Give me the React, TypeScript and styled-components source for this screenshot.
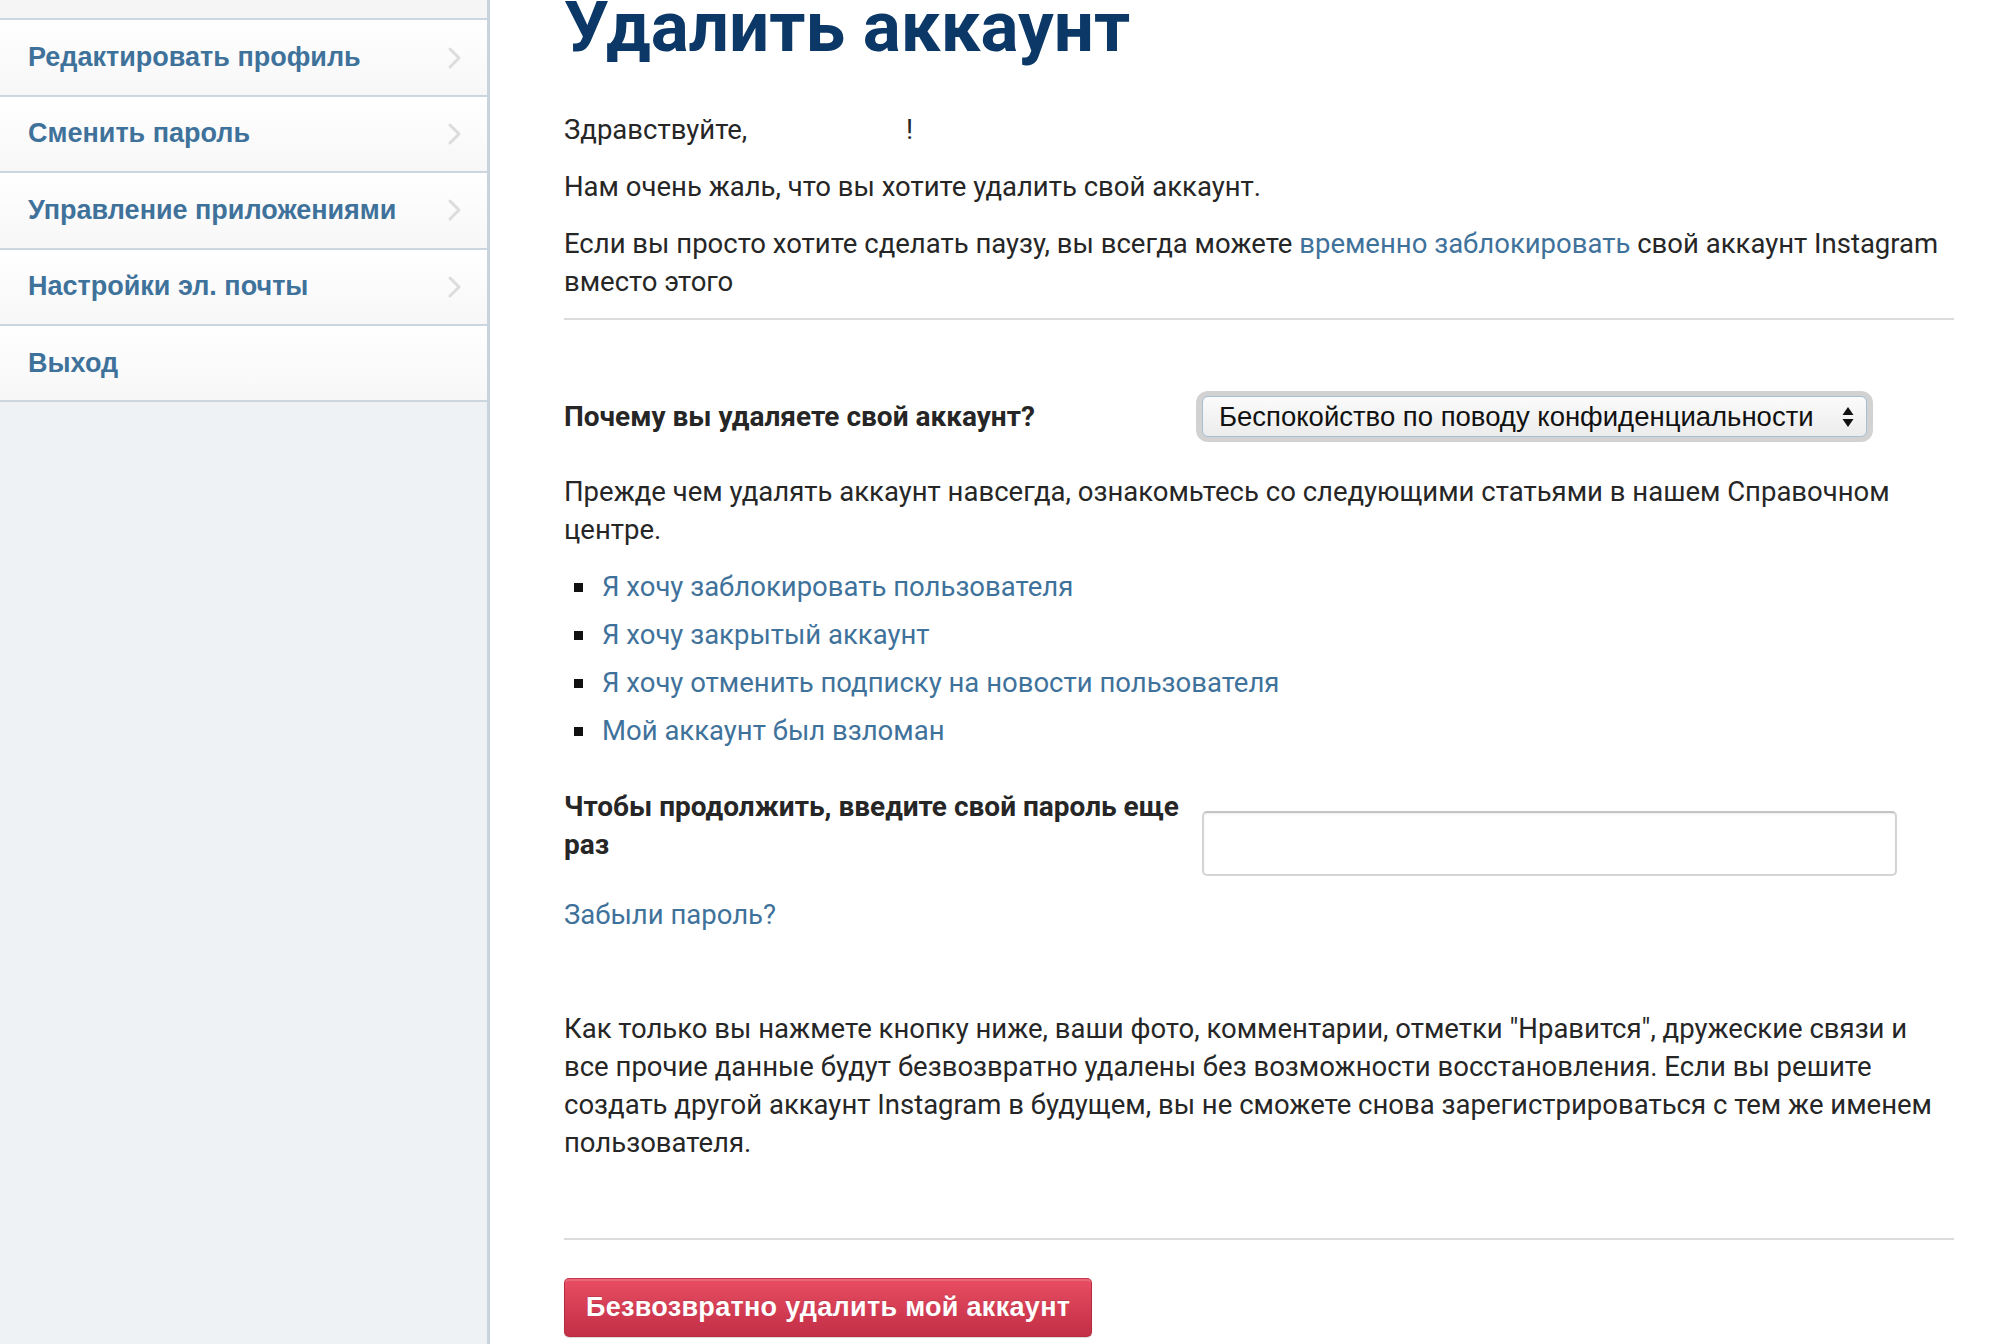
import React from 'react'
import styled, { createGlobalStyle } from 'styled-components'

const GlobalStyle = createGlobalStyle`
  html, body {
    margin: 0;
    padding: 0;
    background: #fff;
  }
  body {
    font-family: Roboto, "Liberation Sans", Arial, sans-serif;
    color: #262626;
    overflow: hidden;
  }
  * {
    box-sizing: border-box;
  }
`

const menuItems = [
  { label: 'Мой профиль', muted: true, arrow: true },
  { label: 'Редактировать профиль', arrow: true },
  { label: 'Сменить пароль', arrow: true },
  { label: 'Управление приложениями', arrow: true },
  { label: 'Настройки эл. почты', arrow: true },
  { label: 'Выход', arrow: false },
]

const helpLinks = [
  'Я хочу заблокировать пользователя',
  'Я хочу закрытый аккаунт',
  'Я хочу отменить подписку на новости пользователя',
  'Мой аккаунт был взломан',
]

// page is scrolled a bit, so the top row and the heading are cut off
const Page = styled.div`
  display: flex;
  min-height: 1420px;
  margin-top: -56px;
`

const Sidebar = styled.nav`
  width: 490px;
  flex-shrink: 0;
  background: #eef2f5;
  border-right: 3px solid #c8d3dd;
`

const MenuList = styled.ul`
  list-style: none;
  margin: 0;
  padding: 0;
`

const MenuItem = styled.li<{ $muted?: boolean }>`
  height: 76.4px;
  display: flex;
  align-items: center;
  justify-content: space-between;
  padding: 0 24px 0 28px;
  background: ${({ $muted }) => ($muted ? '#f5f5f5' : 'linear-gradient(#ffffff, #f7f7f7)')};
  border-bottom: 2px solid #cbd6df;
  font-family: "Liberation Sans", Arial, sans-serif;
  font-weight: 700;
  font-size: 27px;
  color: #3f729b;
  cursor: pointer;
`

const Main = styled.main`
  flex: 1;
  padding: 43px 46px 0 74px;
`

const Title = styled.h1`
  margin: 0 0 44px;
  font-family: Roboto, "Liberation Sans", sans-serif;
  font-weight: 700;
  font-size: 71px;
  line-height: 80px;
  color: #0b3866;
`

const Text = styled.p<{ $gap?: number }>`
  margin: 0 0 ${({ $gap }) => $gap ?? 19}px;
  font-size: 27.5px;
  line-height: 38px;
`

const Link = styled.a`
  color: #3f729b;
  text-decoration: none;
  cursor: pointer;
`

const Divider = styled.hr<{ $after: number }>`
  margin: 0 0 ${({ $after }) => $after}px;
  border: 0;
  height: 2px;
  background: #dbdbdb;
`

const FieldRow = styled.div<{ $align: string }>`
  display: grid;
  grid-template-columns: 632px auto;
  align-items: ${({ $align }) => $align};
`

const Label = styled.div`
  font-size: 28px;
  line-height: 38px;
  font-weight: 700;
`

const SelectRing = styled.div`
  width: 677px;
  padding: 5px 6px;
  border-radius: 12px;
  background: #d2d2d2;
`

const SelectBox = styled.div`
  display: flex;
  align-items: center;
  justify-content: space-between;
  height: 41px;
  padding: 0 12px 0 16px;
  border: 1px solid #a7bfd5;
  border-radius: 6px;
  background: linear-gradient(#fbfbfb, #ececec);
  font-family: "Liberation Sans", Arial, sans-serif;
  font-size: 27.5px;
  color: #111;
`

const HelpList = styled.ul`
  list-style: none;
  margin: 0 0 38px;
  padding: 0 0 0 10px;
  display: flex;
  flex-direction: column;
  gap: 10px;
`

const HelpItem = styled.li`
  display: flex;
  align-items: center;
  gap: 19px;
  font-size: 27.5px;
  line-height: 38px;

  &::before {
    content: '';
    width: 9px;
    height: 9px;
    background: #111;
  }
`

const PasswordInput = styled.input`
  width: 695px;
  height: 65px;
  margin: 23px 0 0 6px;
  border: 2px solid #d4d4d4;
  border-top-color: #c4c4c4;
  border-radius: 5px;
  box-shadow: inset 0 1px 2px rgba(0, 0, 0, 0.08);
  font-size: 26px;
  padding: 0 14px;
  outline: none;
`

const Forgot = styled.div`
  margin: 20px 0 76px;
  font-size: 27.5px;
  line-height: 38px;
`

const DangerButton = styled.button`
  height: 59px;
  padding: 0 21px;
  border: 1px solid #b62b3f;
  border-top-color: #c8354a;
  border-radius: 5px;
  background: linear-gradient(#e84d63, #c22f46);
  box-shadow: inset 0 2px 0 rgba(255, 255, 255, 0.15), 0 1px 1px rgba(0, 0, 0, 0.15);
  color: #fff;
  font-family: "Liberation Sans", Arial, sans-serif;
  font-weight: 700;
  font-size: 27px;
  letter-spacing: 0.3px;
  text-shadow: 0 -1px 0 rgba(0, 0, 0, 0.15);
  cursor: pointer;
`

const Chevron = () => (
  <svg width="16" height="24" viewBox="0 0 16 24">
    <polyline points="3,3 12,12 3,21" fill="none" stroke="#dcdcdc" strokeWidth="3" strokeLinecap="round" strokeLinejoin="round" />
  </svg>
)

const UpDown = () => (
  <svg width="12" height="22" viewBox="0 0 12 22">
    <polygon points="6,1 11.5,9 0.5,9" fill="#111" />
    <polygon points="6,21 11.5,13 0.5,13" fill="#111" />
  </svg>
)

export default function App() {
  return (
    <>
      <GlobalStyle />
      <Page>
        <Sidebar>
          <MenuList>
            {menuItems.map((item) => (
              <MenuItem key={item.label} $muted={item.muted}>
                {item.label}
                {item.arrow && <Chevron />}
              </MenuItem>
            ))}
          </MenuList>
        </Sidebar>

        <Main>
          <Title>Удалить аккаунт</Title>
          <Text>Здравствуйте, <span style={{ display: 'inline-block', width: 152 }} />!</Text>
          <Text>Нам очень жаль, что вы хотите удалить свой аккаунт.</Text>
          <Text $gap={17}>
            Если вы просто хотите сделать паузу, вы всегда можете <Link>временно заблокировать</Link> свой аккаунт Instagram вместо этого
          </Text>
          <Divider $after={71} />

          <FieldRow $align="center">
            <Label>Почему вы удаляете свой аккаунт?</Label>
            <SelectRing>
              <SelectBox>
                <span>Беспокойство по поводу конфиденциальности</span>
                <UpDown />
              </SelectBox>
            </SelectRing>
          </FieldRow>

          <Text style={{ marginTop: 31 }}>
            Прежде чем удалять аккаунт навсегда, ознакомьтесь со следующими статьями в нашем Справочном центре.
          </Text>
          <HelpList>
            {helpLinks.map((l) => (
              <HelpItem key={l}>
                <Link>{l}</Link>
              </HelpItem>
            ))}
          </HelpList>

          <FieldRow $align="start">
            <Label>Чтобы продолжить, введите свой пароль еще раз</Label>
            <PasswordInput type="password" />
          </FieldRow>
          <Forgot>
            <Link>Забыли пароль?</Link>
          </Forgot>

          <Text $gap={76}>
            Как только вы нажмете кнопку ниже, ваши фото, комментарии, отметки "Нравится", дружеские связи и все прочие данные будут безвозвратно удалены без возможности восстановления. Если вы решите создать другой аккаунт Instagram в будущем, вы не сможете снова зарегистрироваться с тем же именем пользователя.
          </Text>
          <Divider $after={38} />
          <DangerButton>Безвозвратно удалить мой аккаунт</DangerButton>
        </Main>
      </Page>
    </>
  )
}
